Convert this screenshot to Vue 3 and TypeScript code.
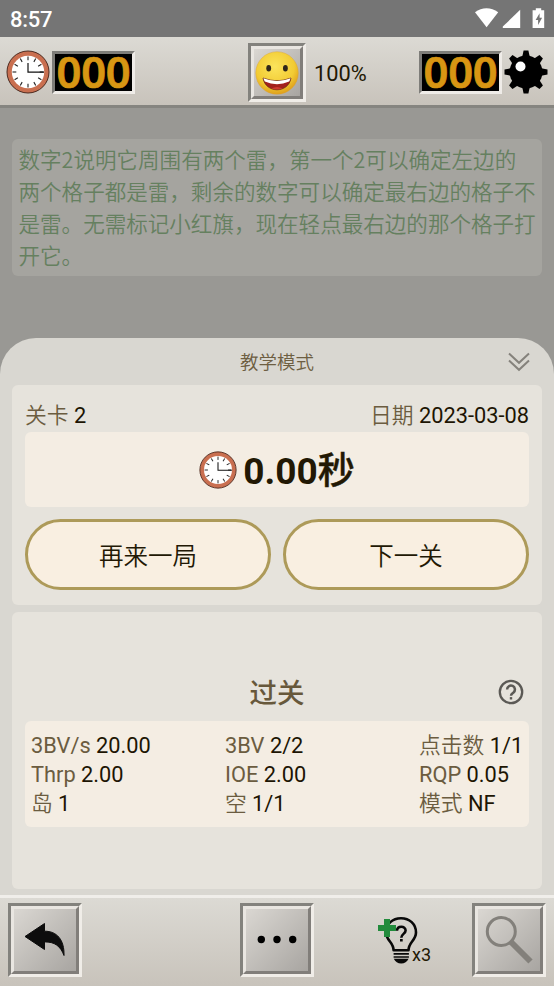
<script setup lang="ts">
interface Stat { label: string; value: string; han?: boolean }

const columns: Stat[][] = [
  [
    { label: '3BV/s', value: '20.00' },
    { label: 'Thrp', value: '2.00' },
    { label: '岛', value: '1', han: true },
  ],
  [
    { label: '3BV', value: '2/2' },
    { label: 'IOE', value: '2.00' },
    { label: '空', value: '1/1', han: true },
  ],
  [
    { label: '点击数', value: '1/1', han: true },
    { label: 'RQP', value: '0.05' },
    { label: '模式', value: 'NF', han: true },
  ],
]

const ticks = Array.from({ length: 12 }, (_, i) => i * 30)
const spikes = Array.from({ length: 8 }, (_, i) => i * 45)
</script>

<template>
  <div class="screen">
    <svg class="defs" width="0" height="0" aria-hidden="true">
      <symbol id="clock" viewBox="0 0 44 44">
        <circle cx="22" cy="22" r="21" fill="#c96f50" stroke="#4d2b20" stroke-width="1" />
        <circle cx="22" cy="22" r="16.2" fill="#fff" />
        <line
          v-for="t in ticks" :key="t" x1="22" y1="6.500" x2="22" y2="10.300"
          stroke="#222" stroke-width="1.100" :transform="`rotate(${t} 22 22)`"
        />
        <path d="M22 13v9.200h16" fill="none" stroke="#111" stroke-width="1.200" />
      </symbol>
    </svg>

    <div class="status">
      <span class="time">8:57</span>
      <svg class="sys" width="70" height="22" viewBox="0 0 70 22">
        <path d="M0 4.200C7-1 16-1 23.200 4.200L11.600 19.300Z" fill="#fff" />
        <path d="M27.800 20V18.600L45.200 1.800V20Z" fill="#fff" />
        <path d="M60.800.200h5.400v2h3v17.800h-11.600v-17.800h3.200z" fill="#fff" />
        <path d="M64.600 5.200L60.600 12h2.500v5l4-7.200h-2.500z" fill="#757575" />
      </svg>
    </div>

    <header class="top">
      <svg class="clock-lg"><use href="#clock" /></svg>
      <div class="led"><span>000</span></div>
      <div class="bevel face">
        <div class="inner">
          <svg width="46" height="46" viewBox="0 0 46 46">
            <defs>
              <radialGradient id="skin" cx=".45" cy=".35" r=".65">
                <stop offset="0" stop-color="#fbe45c" />
                <stop offset=".7" stop-color="#f2cb33" />
                <stop offset="1" stop-color="#dfa01c" />
              </radialGradient>
            </defs>
            <circle cx="23" cy="23" r="21.300" fill="url(#skin)" stroke="#d9a23a" stroke-width=".4" />
            <ellipse cx="14.700" cy="18.200" rx="2.400" ry="3.200" fill="#30271a" />
            <ellipse cx="31.400" cy="18.200" rx="2.400" ry="3.200" fill="#30271a" />
            <path d="M9 28Q23 33.500 37 28C34.500 43.700 11.500 43.700 9 28Z" fill="#a3201d" stroke="#5c2415" stroke-width=".7" />
            <path d="M9.400 28.300Q23 33.700 36.600 28.300Q36 30.400 35.200 31.500Q23 36.800 10.800 31.500Q10 30.400 9.400 28.300Z" fill="#fff" />
            <path d="M17.500 38.600Q23 35.500 28.500 38.600Q26 39.600 23 39.600T17.500 38.600Z" fill="#cf3b31" />
          </svg>
        </div>
      </div>
      <span class="percent">100%</span>
      <div class="led led-right"><span>000</span></div>
      <svg class="mine" viewBox="0 0 44 44">
        <circle cx="22" cy="22" r="16.500" />
        <path v-for="s in spikes" :key="s" d="M18 8L19.600 .500h4.800L26 8z" :transform="`rotate(${s} 22 22)`" />
        <circle cx="16.500" cy="16.500" r="5" fill="#fff" />
      </svg>
    </header>

    <section class="board">
      <p class="hint">数字2说明它周围有两个雷，第一个2可以确定左边的两个格子都是雷，剩余的数字可以确定最右边的格子不是雷。无需标记小红旗，现在轻点最右边的那个格子打开它。</p>
    </section>

    <main class="sheet">
      <div class="sheet-head">
        <span>教学模式</span>
        <svg class="chevrons" width="22" height="20" viewBox="0 0 22 20">
          <path d="M1 1.500L11 10.800L21 1.500M1 8.500L11 17.800L21 8.500" fill="none" stroke="#85827c" stroke-width="2" />
        </svg>
      </div>

      <div class="card result">
        <div class="meta">
          <span class="label han">关卡 <b>2</b></span>
          <span class="label han">日期 <b>2023-03-08</b></span>
        </div>
        <div class="elapsed">
          <svg class="clock-sm"><use href="#clock" /></svg>
          <span>0.00<i>秒</i></span>
        </div>
        <div class="actions">
          <button>再来一局</button>
          <button>下一关</button>
        </div>
      </div>

      <div class="card summary">
        <div class="summary-head">
          <h2>过关</h2>
          <svg class="help" width="26" height="26" viewBox="0 0 26 26">
            <circle cx="13" cy="13" r="11.200" fill="none" stroke="#5b5955" stroke-width="2.300" />
            <path d="M9.100 10.500a3.900 3.900 0 1 1 6.400 3c-1.400 1.100-2.500 1.600-2.500 3.300" fill="none" stroke="#5b5955" stroke-width="2.500" />
            <rect x="11.800" y="18.100" width="2.400" height="2.400" fill="#5b5955" />
          </svg>
        </div>
        <div class="stats">
          <div v-for="(col, i) in columns" :key="i" class="col">
            <span v-for="s in col" :key="s.label" class="label" :class="{ han: s.han }">{{ s.label }} <b>{{ s.value }}</b></span>
          </div>
        </div>
      </div>
    </main>

    <footer class="toolbar">
      <div class="bevel">
        <div class="inner">
          <svg width="68" height="68" viewBox="0 0 68 68">
            <path d="M14 30.500L33.500 17.500V25.200C46 25 53.500 34 53 49.500C49.500 40 43.500 35.700 33.500 35.900V43.500Z" fill="#0d0d0d" stroke="#0d0d0d" stroke-width="1" stroke-linejoin="round" />
          </svg>
        </div>
      </div>
      <div class="bevel more">
        <div class="inner">
          <svg width="68" height="68" viewBox="0 0 68 68">
            <circle cx="18.300" cy="33.500" r="3.700" /><circle cx="34" cy="33.500" r="3.700" /><circle cx="49.700" cy="33.500" r="3.700" />
          </svg>
        </div>
      </div>
      <div class="bulb">
        <svg width="42" height="50" viewBox="0 0 42 50">
          <path d="M15.600 34.300C15.600 26 8 24.500 8 16.500C8 8 14.500 2.200 23 2.200S38 8 38 16.500C38 24.500 30.500 26 30.500 34.300Z" fill="none" stroke="#080808" stroke-width="2.600" stroke-linejoin="round" />
          <path d="M15.600 37.800h15.300M15.600 41h15.300" stroke="#080808" stroke-width="1.700" />
          <path d="M15.800 42.800h14.800c-1.500 3.200-4 4.800-7.400 4.800s-5.900-1.600-7.400-4.800z" fill="#080808" />
          <path d="M19 14.800c.2-5.400 8.600-5.200 8.600-.3 0 3.400-4.300 3.400-4.300 7.200" fill="none" stroke="#080808" stroke-width="2.600" />
          <rect x="22" y="23" width="2.700" height="2.500" fill="#080808" />
          <path d="M6 3h6v6h6v6h-6v6h-6v-6h-6v-6h6z" fill="#228b3c" />
        </svg>
        <span>x3</span>
      </div>
      <div class="bevel search">
        <div class="inner">
          <svg width="68" height="68" viewBox="0 0 68 68">
            <circle cx="26.300" cy="25.500" r="14" fill="none" stroke="#83807b" stroke-width="3" />
            <path d="M35.500 35.500L55.500 55.500" stroke="#83807b" stroke-width="6" />
          </svg>
        </div>
      </div>
    </footer>
  </div>
</template>

<style>
body { margin: 0; }
</style>

<style scoped>
* { box-sizing: border-box; }
svg { display: block; flex: none; }
.defs { position: absolute; }
.screen {
  width: 554px;
  height: 986px;
  display: flex;
  flex-direction: column;
  overflow: hidden;
  background: #999894;
  color: #221804;
  font-family: Roboto, "Noto Sans CJK SC", sans-serif;
  font-size: 21.8px;
}
.status {
  height: 37px;
  flex: none;
  display: flex;
  align-items: center;
  justify-content: space-between;
  padding: 2px 14px 0 10px;
  background: #757575;
  color: #fff;
}
.time { font-size: 22px; font-weight: 500; letter-spacing: -.3px; }
.sys { margin-right: -5px; margin-top: -2px; }
.top {
  height: 71px;
  flex: none;
  display: flex;
  align-items: flex-start;
  padding: 6px 6px 0;
  background: linear-gradient(#dcdad4, #c8c3bb);
  border-bottom: 3px solid #868580;
}
.clock-lg { width: 44px; height: 44px; margin-top: 7px; }
.led {
  width: 83px;
  height: 43px;
  margin: 8px 0 0 2px;
  border: 3px solid;
  border-color: #7e7d79 #efece8 #efece8 #7e7d79;
  background: #000;
  color: #d89613;
  font: 600 43.500px/37px "Noto Sans", sans-serif;
  letter-spacing: -.2px;
  display: flex;
  align-items: center;
  justify-content: center;
}
.led span { margin-top: -2px; -webkit-text-stroke: .7px #d89613; }
.bevel {
  width: 74px;
  height: 74px;
  flex: none;
  border: 3px solid;
  border-color: #83827d #f0ede8 #f0ede8 #83827d;
}
.inner {
  width: 100%;
  height: 100%;
  border: 3px solid;
  border-color: #e9e6e1 #817e7a #817e7a #e9e6e1;
  background: linear-gradient(135deg, #dad7d2, #a8a5a1);
  display: flex;
  align-items: center;
  justify-content: center;
}
.face { width: 58px; height: 59px; margin-left: 113px; }
.percent { width: 54px; margin: 17px 0 0 8px; line-height: 27px; }
.led-right { margin-left: 51px; }
.mine { width: 44px; height: 44px; margin: 7px 0 0 2px; }
.board { height: 230px; flex: none; padding: 31px 12px 0; }
.hint {
  margin: 0;
  height: 137px;
  padding: 4px 5px 0 6.5px;
  border-radius: 6px;
  background: #a5a49f;
  color: #65805f;
  font-family: "Noto Sans CJK SC", sans-serif;
  font-size: 21.55px;
  font-weight: 350;
  line-height: 32px;
}
.sheet {
  height: 557px;
  flex: none;
  padding: 0 12px;
  border-radius: 36px 36px 0 0;
  background: #d9d7d1;
}
.sheet-head {
  height: 47px;
  display: grid;
  grid-template-columns: 1fr auto 1fr;
  align-items: center;
  font-size: 18.5px;
  font-weight: 350;
  color: #6d5e42;
}
.sheet-head span { grid-column: 2; margin-top: -2px; }
.chevrons { justify-self: end; margin-right: 12.5px; }
.card { padding: 0 13px; border-radius: 6px; background: #e6e3dc; }
.result { height: 220px; padding-top: 14px; }
.meta { display: flex; justify-content: space-between; height: 33px; line-height: 33px; }
.label { color: #6b5c40; white-space: pre; }
.han { font-weight: 350; }
.label b { color: #1d1503; font-weight: 400; }
.elapsed {
  height: 75px;
  display: flex;
  align-items: center;
  justify-content: center;
  gap: 6px;
  border-radius: 6px;
  background: #f4ede3;
  font-size: 37px;
  font-weight: 700;
}
.elapsed span { margin-top: -4px; }
.elapsed i { font-style: normal; font-weight: 500; -webkit-text-stroke: .4px #221804; }
.clock-sm { width: 38px; height: 38px; }
.actions { display: grid; grid-template-columns: 1fr 1fr; gap: 12px; margin-top: 12px; }
button {
  height: 71px;
  padding: 0;
  border: 3px solid #ad9a59;
  border-radius: 36px;
  background: #f9efe1;
  color: #221804;
  font-family: inherit;
  font-size: 24.5px;
  font-weight: 350;
}
.summary { height: 277px; margin-top: 7px; padding-top: 57px; }
.summary-head { height: 52px; display: grid; grid-template-columns: 1fr auto 1fr; align-items: center; }
h2 { grid-column: 2; margin: -8px 0 0; font-size: 27.5px; font-weight: 500; color: #67583b; }
.help { justify-self: end; margin-right: 5px; margin-top: -6px; }
.stats {
  height: 106px;
  padding: 10px 6px 0;
  display: grid;
  grid-template-columns: 194px 194px auto;
  border-radius: 6px;
  background: #f4ede3;
}
.col { display: flex; flex-direction: column; line-height: 29px; }
.toolbar {
  height: 91px;
  flex: none;
  display: flex;
  align-items: flex-start;
  padding: 5px 8px 0;
  border-top: 3px solid #f0eeea;
  background: linear-gradient(#dcdad4, #c8c3bb);
}
.more { margin-left: 158px; }
.bulb { width: 54px; display: flex; margin: 13px 0 0 64px; }
.bulb span { font-size: 18px; line-height: 22px; margin: 28px 0 0 -8px; }
.search { margin-left: auto; }
</style>
